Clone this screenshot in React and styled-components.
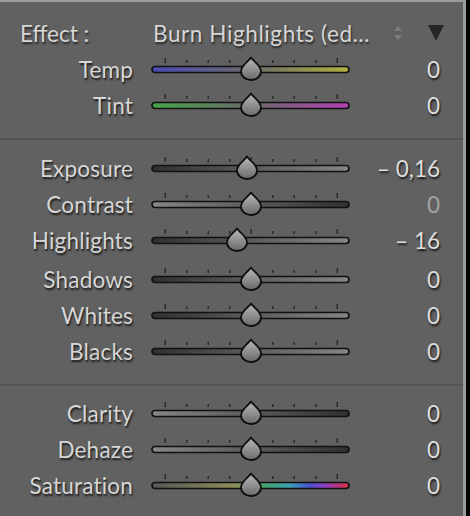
import React, { useId } from 'react';
import styled, { createGlobalStyle } from 'styled-components';

const GlobalStyle = createGlobalStyle`
  html, body {
    margin: 0;
    padding: 0;
    background: #000;
  }
  body {
    font-family: 'Lato', 'Open Sans', sans-serif;
  }
`;

const Panel = styled.div`
  width: 463px;
  height: 514px;
  background: #616161;
  border-top: 2px solid #9c9c9c;
  border-right: 3px solid #9c9c9c;
  overflow: hidden;
`;

const Section = styled.div`
  display: flex;
  flex-direction: column;
  padding: ${(p) => p.$pad};
  border-bottom: ${(p) => (p.$divider ? '2px solid #545454' : 'none')};
`;

const Row = styled.div`
  display: grid;
  grid-template-columns: 133px 202px 1fr;
  column-gap: 17px;
  align-items: center;
  height: ${(p) => p.$h || 36}px;
  padding-right: 23px;
`;

const Label = styled.div`
  text-align: right;
  font-size: 22.5px;
  letter-spacing: 0.2px;
  color: #d6d6d6;
  text-shadow: 1px 2px 2px rgba(0, 0, 0, 0.75);
  white-space: nowrap;
`;

const Value = styled.div`
  text-align: right;
  font-size: 22.5px;
  color: ${(p) => (p.$dim ? '#a2a2a2' : '#dedede')};
  text-shadow: ${(p) => (p.$dim ? 'none' : '1px 2px 2px rgba(0, 0, 0, 0.75)')};
  white-space: nowrap;
`;

const HeaderRow = styled.div`
  display: flex;
  align-items: center;
  height: 36px;
  padding-left: 20px;
`;

const EffectLabel = styled.div`
  width: 133px;
  font-size: 22.5px;
  color: #d6d6d6;
  text-shadow: 1px 2px 2px rgba(0, 0, 0, 0.6);
`;

const EffectValue = styled.div`
  width: 238px;
  font-size: 22.5px;
  letter-spacing: 0.6px;
  color: #d6d6d6;
  text-shadow: 1px 2px 2px rgba(0, 0, 0, 0.6);
  white-space: nowrap;
`;

const Stepper = styled.svg`
  width: 14px;
  height: 20px;
`;

const Triangle = styled.svg`
  width: 18px;
  height: 18px;
  margin-left: 22px;
`;

const gradients = {
  temp: [
    [0, '#4a4ab4'],
    [0.5, '#6a6a6a'],
    [1, '#b0b040'],
  ],
  tint: [
    [0, '#46a448'],
    [0.5, '#6a6a6a'],
    [1, '#b440b4'],
  ],
  up: [
    [0, '#303030'],
    [1, '#868686'],
  ],
  down: [
    [0, '#868686'],
    [1, '#303030'],
  ],
  sat: [
    [0, '#565656'],
    [0.42, '#8e8e58'],
    [0.55, '#48a060'],
    [0.7, '#3aa0b4'],
    [0.8, '#4a50d0'],
    [0.88, '#9040c0'],
    [1, '#d83040'],
  ],
};

const TICKS = [-4, -3, -2, -1, 0, 1, 2, 3, 4];

const Slider = ({ kind, pos = 0 }) => {
  const id = useId().replace(/:/g, '');
  const cx = 101 + pos;
  const stops = gradients[kind];
  return (
    <svg width="202" height="26" viewBox="0 0 202 26">
      <defs>
        <linearGradient id={`g${id}`} x1="0" x2="1" y1="0" y2="0">
          {stops.map(([o, c]) => (
            <stop key={o} offset={o} stopColor={c} />
          ))}
        </linearGradient>
        <linearGradient id={`k${id}`} x1="0" x2="0" y1="0" y2="1">
          <stop offset="0" stopColor="#b8b8b8" />
          <stop offset="1" stopColor="#6a6a6a" />
        </linearGradient>
      </defs>
      {TICKS.map((k) => {
        const x = 101 + k * 21.5;
        const tall = k === -4 || k === 0 || k === 4;
        return <rect key={k} x={x - 0.5} y={tall ? 2 : 4} width="1.5" height={tall ? 5 : 3} fill="#2a2a2a" />;
      })}
      <rect x="2" y="10.5" width="197" height="6" rx="3" fill={`url(#g${id})`} stroke="#111" strokeWidth="1.7" />
      <path
        d={`M${cx} 1.5 C${cx + 3} 6 ${cx + 10} 9 ${cx + 10} 15.5 A10 8.5 0 0 1 ${cx - 10} 15.5 C${cx - 10} 9 ${cx - 3} 6 ${cx} 1.5 Z`}
        fill={`url(#k${id})`}
        stroke="#0e0e0e"
        strokeWidth="1.8"
        strokeLinejoin="round"
      />
    </svg>
  );
};

const SliderRow = ({ label, kind, pos, value, dim }) => (
  <Row>
    <Label>{label}</Label>
    <Slider kind={kind} pos={pos} />
    <Value $dim={dim}>{value}</Value>
  </Row>
);

const App = () => (
  <>
    <GlobalStyle />
    <Panel>
      <Section $pad="13px 0 15px" $divider>
        <HeaderRow>
          <EffectLabel>Effect :</EffectLabel>
          <EffectValue>Burn Highlights (ed…</EffectValue>
          <Stepper viewBox="0 0 14 20">
            <path d="M7 3 L11 8 L3 8 Z" fill="#7c7c7c" />
            <path d="M7 17 L11 12 L3 12 Z" fill="#7c7c7c" />
          </Stepper>
          <Triangle viewBox="0 0 18 18">
            <path d="M1 1 L17 1 L9 17 Z" fill="#262626" />
          </Triangle>
        </HeaderRow>
        <SliderRow label="Temp" kind="temp" value="0" />
        <SliderRow label="Tint" kind="tint" value="0" />
      </Section>
      <Section $pad="10px 0 15px" $divider>
        <SliderRow label="Exposure" kind="up" pos={-4} value="– 0,16" />
        <SliderRow label="Contrast" kind="down" value="0" dim />
        <SliderRow label="Highlights" kind="up" pos={-14} value="– 16" />
        <Row $h={3} />
        <SliderRow label="Shadows" kind="up" value="0" />
        <SliderRow label="Whites" kind="up" value="0" />
        <SliderRow label="Blacks" kind="up" value="0" />
      </Section>
      <Section $pad="9px 0 0">
        <SliderRow label="Clarity" kind="down" value="0" />
        <SliderRow label="Dehaze" kind="down" value="0" />
        <SliderRow label="Saturation" kind="sat" value="0" />
      </Section>
    </Panel>
  </>
);

export default App;
